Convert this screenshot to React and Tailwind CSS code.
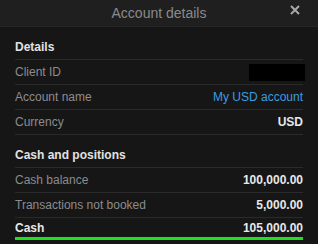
export default function App() {
  const font = { fontFamily: '"Liberation Sans", Arial, sans-serif' };
  const Row = ({ label, children, last }) => (
    <div className={`flex h-[25px] items-center justify-between ${last ? "" : "border-b border-[#2a2a2a]"}`}>
      <span className="text-[12px] text-[#8c8c8c]">{label}</span>
      {children}
    </div>
  );
  const Heading = ({ children }) => (
    <div className="border-b border-[#2a2a2a] pt-[12px] pb-[4px] text-[12px] font-bold leading-[16px] text-[#e2e2e2]">
      {children}
    </div>
  );
  return (
    <div className="h-[244px] w-[318px] overflow-hidden bg-[#161616]" style={font}>
      <div className="relative flex h-[27px] items-center justify-center border-b border-[#262626] bg-[#1f1f1f]">
        <span className="text-[14px] leading-none text-[#8a8a8a]">Account details</span>
        <svg className="absolute left-[290px] top-[5px]" width="10" height="10" viewBox="0 0 10 10">
          <path d="M1 1L9 9M9 1L1 9" stroke="#a8a8a8" strokeWidth="2" />
        </svg>
      </div>
      <div className="px-[15px]">
        <Heading>Details</Heading>
        <Row label="Client ID">
          <div className="mr-[-2px] h-[17px] w-[56px] bg-black" />
        </Row>
        <Row label="Account name">
          <span className="text-[12px] text-[#3b9de0]">My USD account</span>
        </Row>
        <Row label="Currency">
          <span className="text-[12px] font-bold text-[#e8e8e8]">USD</span>
        </Row>
        <Heading>Cash and positions</Heading>
        <Row label="Cash balance">
          <span className="text-[12px] font-bold text-[#e8e8e8]">100,000.00</span>
        </Row>
        <Row label="Transactions not booked">
          <span className="text-[12px] font-bold text-[#e8e8e8]">5,000.00</span>
        </Row>
        <div className="flex h-[22px] items-center justify-between border-b-[3px] border-[#1ee01e]">
          <span className="text-[12px] font-bold text-[#e8e8e8]">Cash</span>
          <span className="text-[12px] font-bold text-[#e8e8e8]">105,000.00</span>
        </div>
      </div>
    </div>
  );
}
